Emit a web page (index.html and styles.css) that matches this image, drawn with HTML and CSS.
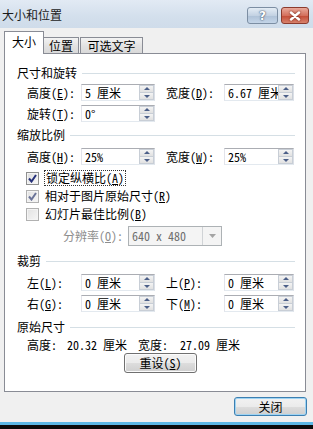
FILE: index.html
```html
<!DOCTYPE html>
<html lang="zh-CN">
<head>
    <meta charset="UTF-8">
    <title>大小和位置</title>
    <link rel="stylesheet" href="styles.css">
</head>
<body>
<div class="dialog">
    <div class="titlebar">
        <span class="title">大小和位置</span>
        <div class="caption-btns">
            <div class="cap help">?</div>
            <div class="cap close">
                <svg width="12" height="10" viewBox="0 0 12 10"><path d="M2 1.5 L10 8.5 M10 1.5 L2 8.5" stroke="#fff" stroke-width="2.4" stroke-linecap="round"/></svg>
            </div>
        </div>
    </div>

    <div class="tabs">
        <div class="tab active">大小</div>
        <div class="tab">位置</div>
        <div class="tab wide">可选文字</div>
    </div>

    <div class="panel">
        <!-- 尺寸和旋转 -->
        <div class="group-title first"><span>尺寸和旋转</span><i></i></div>
        <div class="fields">
            <label>高度(<u>E</u>):</label>
            <div class="spin"><span class="val">5 厘米</span><span class="arrows"><b class="up"></b><b class="down"></b></span></div>
            <label class="l2">宽度(<u>D</u>):</label>
            <div class="spin narrow"><span class="val">6.67 厘米</span><span class="arrows"><b class="up"></b><b class="down"></b></span></div>

            <label>旋转(<u>T</u>):</label>
            <div class="spin"><span class="val">0°</span><span class="arrows"><b class="up"></b><b class="down"></b></span></div>
        </div>

        <!-- 缩放比例 -->
        <div class="group-title"><span>缩放比例</span><i></i></div>
        <div class="fields">
            <label>高度(<u>H</u>):</label>
            <div class="spin"><span class="val">25%</span><span class="arrows"><b class="up"></b><b class="down"></b></span></div>
            <label class="l2">宽度(<u>W</u>):</label>
            <div class="spin narrow"><span class="val">25%</span><span class="arrows"><b class="up"></b><b class="down"></b></span></div>
        </div>

        <div class="checks">
            <div class="check">
                <span class="box on"><svg width="9" height="9" viewBox="0 0 9 9"><path d="M1 4.5 L3.5 7.5 L8 1" fill="none" stroke="#26317a" stroke-width="2"/></svg></span>
                <span class="focus">锁定纵横比(<u>A</u>)</span>
            </div>
            <div class="check">
                <span class="box on dim"><svg width="9" height="9" viewBox="0 0 9 9"><path d="M1 4.5 L3.5 7.5 L8 1" fill="none" stroke="#6a7398" stroke-width="2"/></svg></span>
                <span>相对于图片原始尺寸(<u>R</u>)</span>
            </div>
            <div class="check">
                <span class="box dim"></span>
                <span>幻灯片最佳比例(<u>B</u>)</span>
            </div>
        </div>

        <div class="res-row">
            <span class="res-label">分辨率(<u>O</u>):</span>
            <div class="select">
                <span class="val">640 x 480</span>
                <span class="drop"><svg width="7" height="4" viewBox="0 0 7 4"><path d="M0 0 H7 L3.5 4 Z" fill="#a4a4a4"/></svg></span>
            </div>
        </div>

        <!-- 裁剪 -->
        <div class="group-title gap7"><span>裁剪</span><i></i></div>
        <div class="fields">
            <label>左(<u>L</u>):</label>
            <div class="spin"><span class="val">0 厘米</span><span class="arrows"><b class="up"></b><b class="down"></b></span></div>
            <label class="l2">上(<u>P</u>):</label>
            <div class="spin narrow"><span class="val">0 厘米</span><span class="arrows"><b class="up"></b><b class="down"></b></span></div>

            <label>右(<u>G</u>):</label>
            <div class="spin"><span class="val">0 厘米</span><span class="arrows"><b class="up"></b><b class="down"></b></span></div>
            <label class="l2">下(<u>M</u>):</label>
            <div class="spin narrow"><span class="val">0 厘米</span><span class="arrows"><b class="up"></b><b class="down"></b></span></div>
        </div>

        <!-- 原始尺寸 -->
        <div class="group-title gap7"><span>原始尺寸</span><i></i></div>
        <div class="orig">
            <span class="o1">高度:</span>
            <span class="o2">20.32 厘米</span>
            <span class="o3">宽度:</span>
            <span>27.09 厘米</span>
        </div>
        <div class="btn reset">重设(<u>S</u>)</div>
    </div>

    <div class="footer">
        <div class="btn default">关闭</div>
    </div>
    <div class="taskbar-edge"></div>
</div>
</body>
</html>
```

FILE: styles.css
```css
* {
    box-sizing: border-box;
}
body {
    margin: 0;
    background: #f0f0f0;
    font-family: "Noto Sans Mono CJK SC", "Noto Sans CJK SC", "DejaVu Sans", sans-serif;
    font-size: 12px;
    line-height: 16px;
    color: #000;
}
u {
    text-decoration: underline;
    text-underline-offset: 1px;
}
.dialog {
    width: 313px;
    height: 429px;
    background: #f0f0f0;
    display: flex;
    flex-direction: column;
    overflow: hidden;
}

/* title bar */
.titlebar {
    height: 28px;
    flex: none;
    display: flex;
    justify-content: space-between;
    align-items: flex-start;
    padding-left: 2px;
    background: linear-gradient(#e2eaf4, #d3dfec 60%, #cfdcea);
}
.title {
    margin-top: 7px;
    font-size: 12px;
    color: #1b1b1b;
}
.caption-btns {
    display: flex;
    gap: 3px;
    margin-top: 7px;
    margin-right: 4px;
}
.cap {
    height: 17px;
    border-radius: 3px;
    display: flex;
    align-items: center;
    justify-content: center;
}
.help {
    width: 31px;
    border: 1px solid #7c8ea3;
    background: linear-gradient(#e4ecf5, #c3d2e3 50%, #aec1d7 51%, #c4d5e8);
    color: #fff;
    font-family: "DejaVu Sans", sans-serif;
    font-weight: bold;
    font-size: 12px;
    text-shadow: 0 0 2px #3c4e66, 0 0 1px #3c4e66;
}
.close {
    width: 28px;
    border: 1px solid #8b3b2e;
    background: linear-gradient(#e9a99b, #d4705d 50%, #c34a35 51%, #d8826c);
}
.close svg {
    filter: drop-shadow(0 0 1px #6e2418);
}

/* tabs */
.tabs {
    margin-top: 4px;
    height: 21px;
    flex: none;
    display: flex;
    align-items: flex-end;
    padding-left: 4px;
    position: relative;
    z-index: 1;
}
.tab {
    height: 16px;
    width: 36px;
    border: 1px solid #898c95;
    border-bottom: none;
    background: linear-gradient(#f3f3f3, #e3e3e3 50%, #d9d9d9);
    text-align: center;
    line-height: 15px;
    margin-left: -1px;
}
.tab.wide {
    width: 63px;
    margin-left: 1px;
}
.tab.active {
    height: 23px;
    width: 40px;
    margin-left: 0;
    margin-bottom: -1px;
    background: #fff;
    line-height: 20px;
    z-index: 2;
}

/* panel */
.panel {
    height: 339px;
    flex: none;
    margin: 0 7px 0 4px;
    border: 1px solid #898c95;
    background: #fff;
    padding-top: 11px;
}
.group-title {
    display: flex;
    align-items: center;
    gap: 5px;
    margin: 5px 10px 0 12px;
    height: 16px;
}
.group-title.first {
    margin-top: 0;
}
.group-title.gap7 {
    margin-top: 7px;
}
.group-title i {
    flex: 1;
    height: 1px;
    background: #d5dfe5;
}
.fields {
    display: grid;
    grid-template-columns: 54px 74px 69px 70px;
    grid-auto-rows: 17px;
    row-gap: 4px;
    margin: 3px 0 0 22px;
}
.group-title + .fields {
    margin-top: 3px;
}
.group-title:not(.first) + .fields {
    margin-top: 5px;
}
.fields label {
    line-height: 17px;
}
.fields .l2 {
    padding-left: 11px;
}
.spin {
    display: flex;
    border: 1px solid #abadb3;
    border-color: #abadb3 #dbdfe6 #e3e9ef #e2e3ea;
    background: #fff;
    overflow: hidden;
}
.spin .val {
    flex: 1;
    padding-left: 3px;
    line-height: 15px;
    white-space: nowrap;
    overflow: hidden;
}
.arrows {
    width: 15px;
    flex: none;
    display: flex;
    flex-direction: column;
}
.arrows b {
    flex: 1;
    border: 1px solid #c8ced6;
    background: linear-gradient(#f4f4f4, #e1e1e1);
    position: relative;
}
.arrows b + b {
    border-top: none;
}
.arrows b::after {
    content: "";
    position: absolute;
    left: 4px;
    top: 1px;
    border-left: 3px solid transparent;
    border-right: 3px solid transparent;
}
.arrows .up::after {
    border-bottom: 3px solid #4c5f88;
}
.arrows .down::after {
    top: 2px;
    border-top: 3px solid #4c5f88;
}

/* checkboxes */
.checks {
    margin: 5px 0 0 21px;
    display: flex;
    flex-direction: column;
    gap: 2px;
}
.check {
    display: flex;
    align-items: center;
    height: 16px;
    gap: 6px;
}
.box {
    width: 13px;
    height: 13px;
    border: 1px solid #8e8f8f;
    background: linear-gradient(135deg, #dcdcdc, #f9f9f9);
    box-shadow: inset 0 0 0 1px #f4f4f4;
    display: flex;
    align-items: center;
    justify-content: center;
}
.box.dim {
    border-color: #b1b1b1;
    background: linear-gradient(135deg, #e2e2e2, #f6f6f6);
}
.focus {
    outline: 1px dotted #333;
    outline-offset: 0;
    padding: 0 1px;
    line-height: 14px;
}

/* resolution */
.res-row {
    display: flex;
    align-items: center;
    margin: 4px 0 0 58px;
    height: 20px;
}
.res-label {
    width: 65px;
    color: #8d8d8d;
}
.select {
    width: 94px;
    height: 20px;
    display: flex;
    border: 1px solid #adb2b5;
    background: #f4f4f4;
    color: #6d6d6d;
}
.select .val {
    flex: 1;
    padding-left: 3px;
    line-height: 18px;
}
.select .drop {
    width: 19px;
    border-left: 1px solid #d0d3d6;
    display: flex;
    align-items: center;
    justify-content: center;
}

/* original size */
.orig {
    display: flex;
    margin: 2px 0 0 22px;
    height: 15px;
    line-height: 15px;
}
.o1 {
    width: 40px;
}
.o2 {
    width: 71px;
}
.o3 {
    width: 42px;
}

/* buttons */
.btn {
    height: 20px;
    border: 1px solid #707070;
    border-radius: 3px;
    background: linear-gradient(#f2f2f2, #ebebeb 50%, #dddddd 51%, #cfcfcf);
    box-shadow: inset 0 0 0 1px #fbfbfb;
    text-align: center;
    line-height: 18px;
}
.reset {
    width: 73px;
    margin: 1px 0 0 119px;
}
.footer {
    display: flex;
    justify-content: flex-end;
    padding-right: 6px;
    margin-top: 5px;
    flex: none;
}
.default {
    width: 73px;
    height: 19px;
    line-height: 17px;
    border-color: #3c7fb1;
    box-shadow: inset 0 0 0 1px #9fd4f3;
}
.taskbar-edge {
    margin-top: 6px;
    height: 7px;
    border-top: 3px solid #5bb8e6;
    background: #0b0b0b;
    flex: none;
}
```
